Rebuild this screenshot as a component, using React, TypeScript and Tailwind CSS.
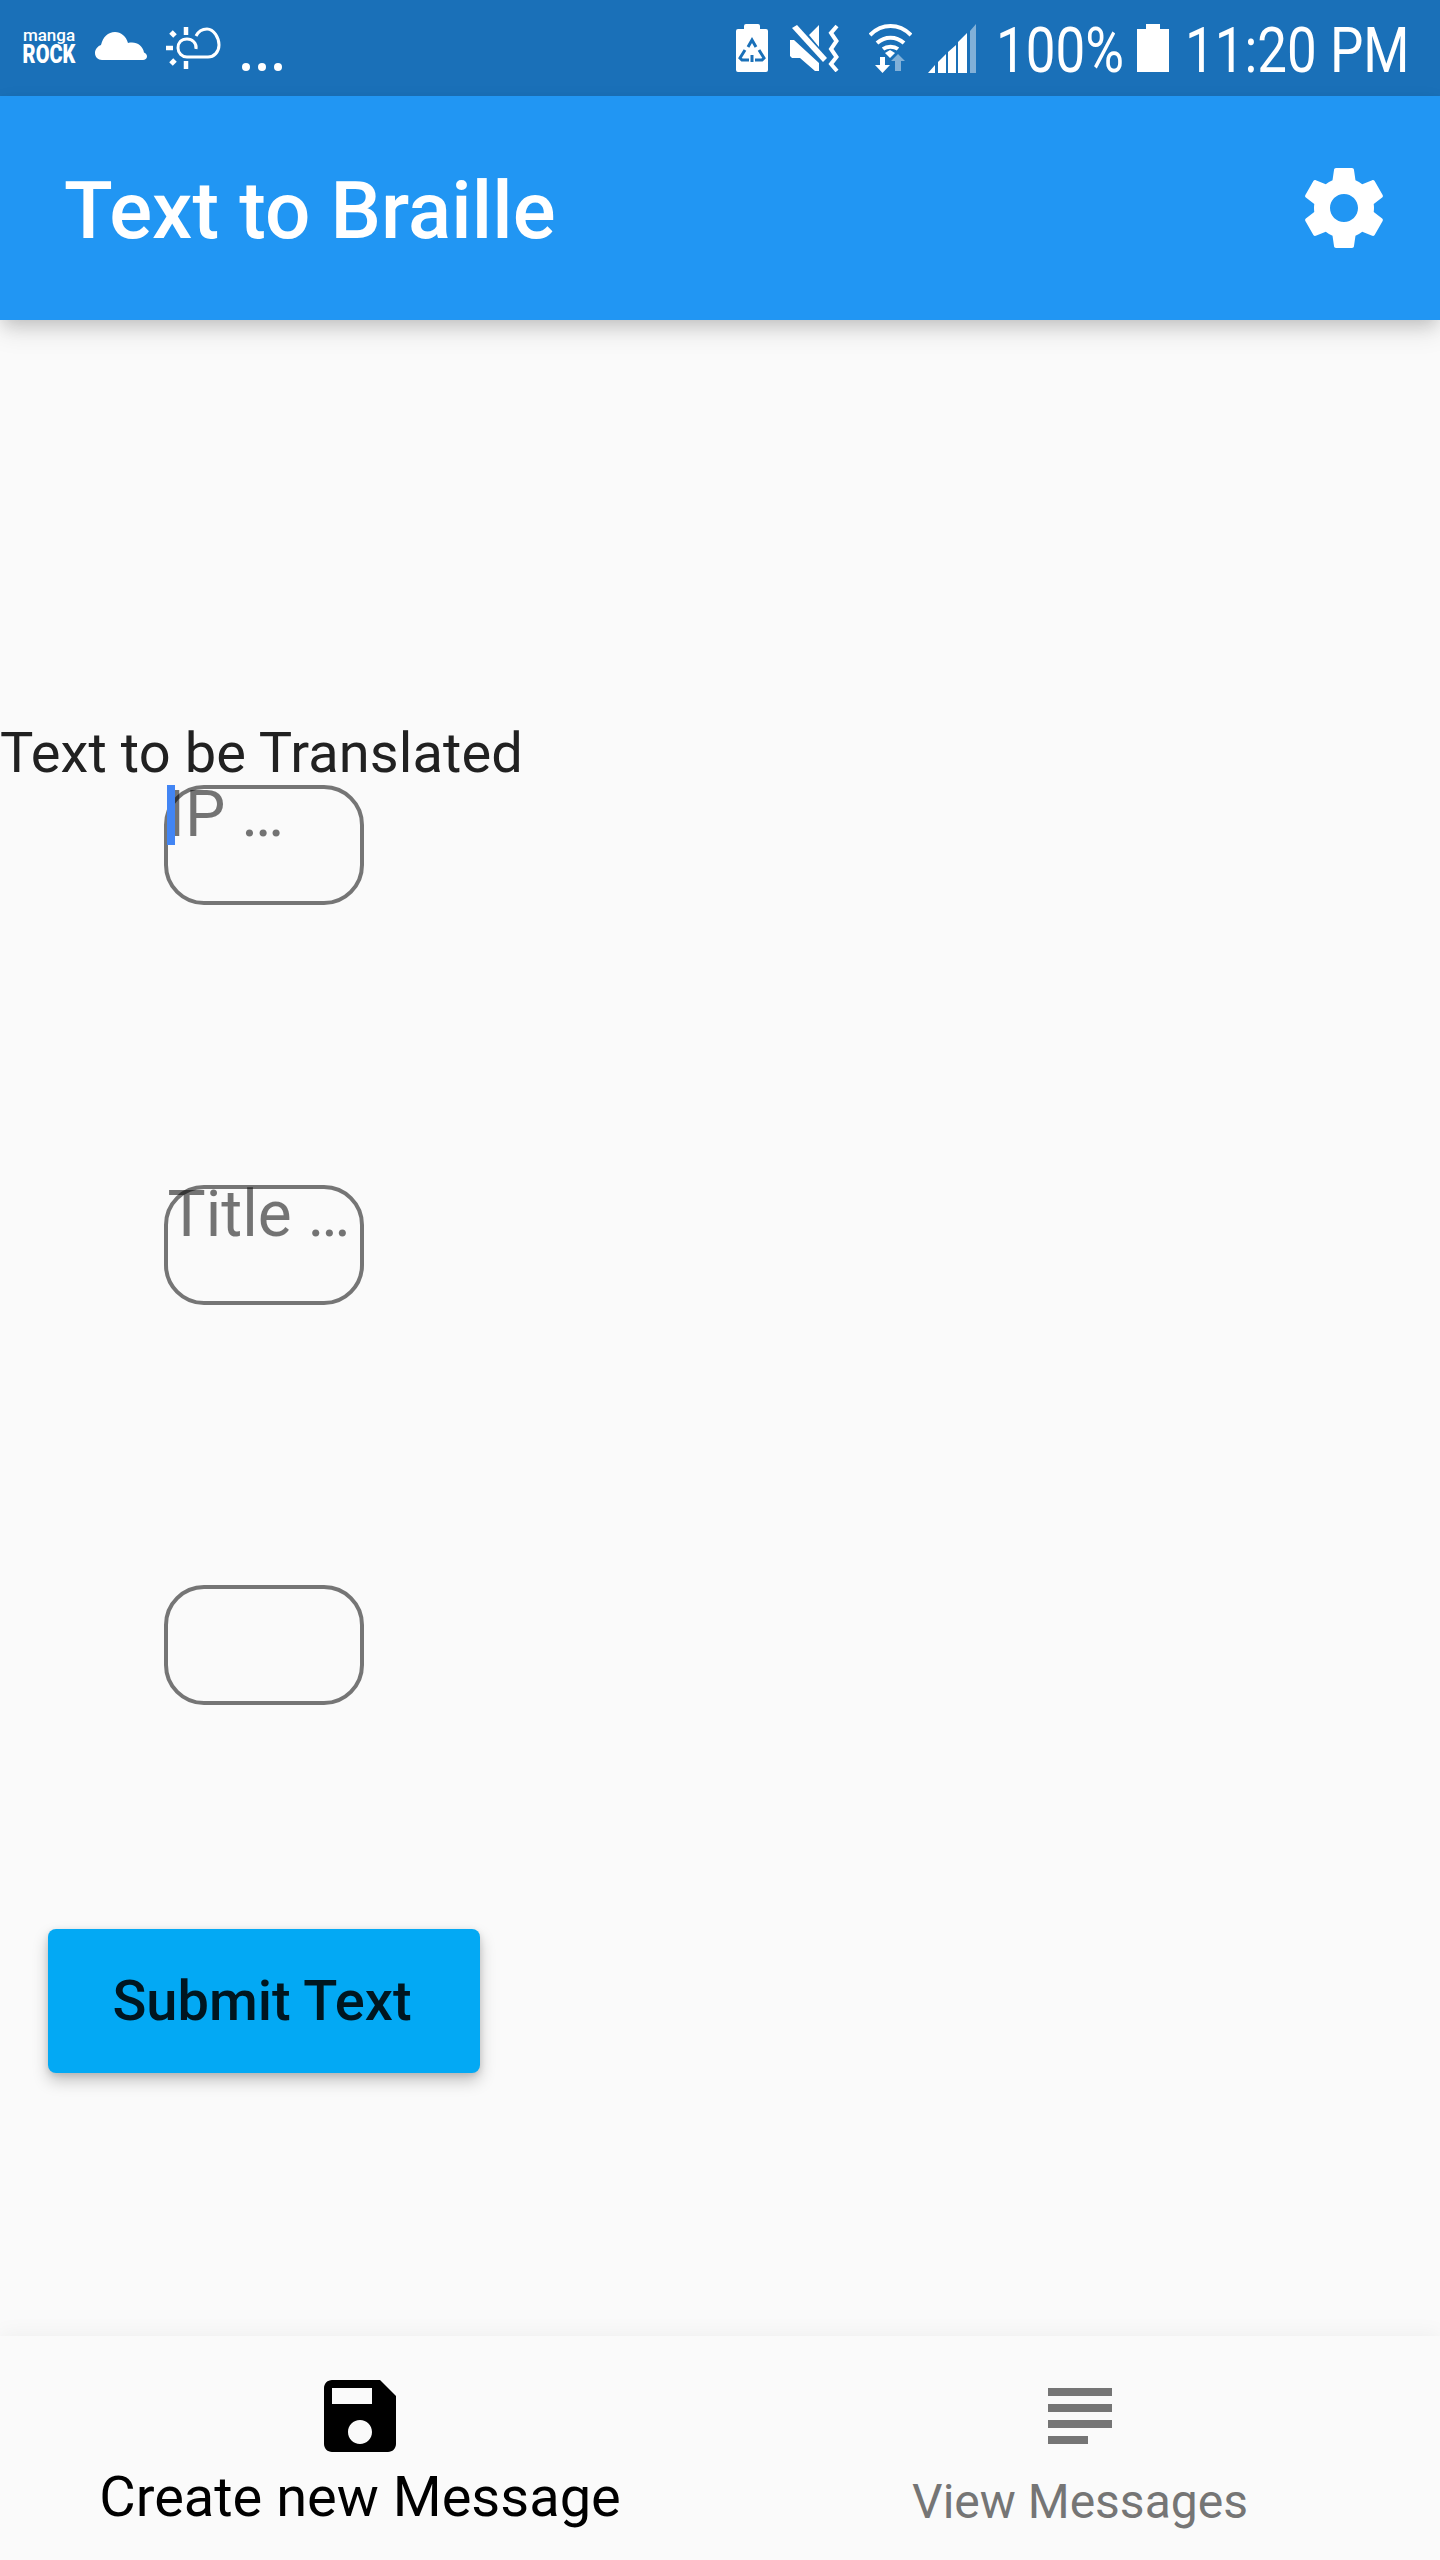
const SAVE_ICON = 'M17 3H5c-1.11 0-2 .9-2 2v14c0 1.1.89 2 2 2h14c1.1 0 2-.9 2-2V7l-4-4zm-5 16c-1.66 0-3-1.34-3-3s1.34-3 3-3 3 1.34 3 3-1.34 3-3 3zm3-10H5V5h10v4z';
const LIST_ICON = 'M14 17H4v2h10v-2zm6-8H4v2h16V9zM4 15h16v-2H4v2zM4 5v2h16V5H4z';
const GEAR_ICON = 'M19.43 12.98c.04-.32.07-.64.07-.98s-.03-.66-.07-.98l2.11-1.65c.19-.15.24-.42.12-.64l-2-3.46c-.12-.22-.39-.3-.61-.22l-2.49 1c-.52-.4-1.08-.73-1.69-.98l-.38-2.65C14.46 2.18 14.25 2 14 2h-4c-.25 0-.46.18-.49.42l-.38 2.65c-.61.25-1.17.59-1.69.98l-2.49-1c-.23-.09-.49 0-.61.22l-2 3.46c-.13.22-.07.49.12.64l2.11 1.65c-.04.32-.07.65-.07.98s.03.66.07.98l-2.11 1.65c-.19.15-.24.42-.12.64l2 3.46c.12.22.39.3.61.22l2.49-1c.52.4 1.08.73 1.69.98l.38 2.65c.03.24.24.42.49.42h4c.25 0 .46-.18.49-.42l.38-2.65c.61-.25 1.17-.59 1.69-.98l2.49 1c.23.09.49 0 .61-.22l2-3.46c.12-.22.07-.49-.12-.64l-2.11-1.65zM12 15.5c-1.93 0-3.5-1.57-3.5-3.5s1.57-3.5 3.5-3.5 3.5 1.57 3.5 3.5-1.57 3.5-3.5 3.5z';

function MaterialIcon({ d, className }: { d: string; className: string }) {
  return (
    <svg viewBox="0 0 24 24" className={className} fill="currentColor">
      <path d={d} />
    </svg>
  );
}

function MangaRock() {
  return (
    <div className="flex h-8 w-[52px] flex-col items-center text-white">
      <span className="-mt-[3px] h-[13px] text-[17px] leading-[12px] font-medium">manga</span>
      <span className="mt-1 h-[18px] origin-center scale-x-[0.8] text-[25px] leading-[18px] font-black whitespace-nowrap">ROCK</span>
    </div>
  );
}

function StatusBar() {
  return (
    <div className="flex h-24 items-center justify-between bg-[#1a70b8] pr-[30px] pl-[23px] text-white">
      <div className="flex items-center">
        <MangaRock />
        <svg viewBox="0 0 52 28" className="mb-1 ml-5 h-7 w-[52px]" fill="currentColor">
          <path d="M7 28C3 28 0 25 0 21c0-4 3-7 6-8C8 5 13 0 20 0c6 0 11 4 13 11 1-.5 3-.5 4-.5 6 0 11 4 12 10 2 1 3 2 3 4 0 2-2 3.500-4 3.500z" />
        </svg>
        <svg viewBox="0 0 55 42" className="ml-[19px] h-[42px] w-[55px]" fill="none" stroke="currentColor" strokeWidth="3">
          <path d="M20 0v8M20 34v8M0 21h7" strokeWidth="4.500" />
          <path d="M5 5l4 4M5 37l4-4" strokeWidth="5" />
          <path d="M30 22c1-6-4-10-9-10-6 0-9 4-9 9s4 9 9 9h21c6 0 11-5 11-12S48 2 41 2c-5 0-9 3-11 7" />
        </svg>
        <span className="mt-[38px] ml-[21px] flex gap-2">
          <i className="size-2 rounded-full bg-white" />
          <i className="size-2 rounded-full bg-white" />
          <i className="size-2 rounded-full bg-white" />
        </span>
      </div>
      <div className="flex items-center">
        <svg viewBox="0 0 32 48" className="h-12 w-8" fill="currentColor">
          <path d="M8 2a2 2 0 0 1 2-2h12a2 2 0 0 1 2 2v3h6a2 2 0 0 1 2 2v39a2 2 0 0 1-2 2H2a2 2 0 0 1-2-2V7a2 2 0 0 1 2-2h6z" />
          <g fill="none" stroke="#1a70b8" strokeWidth="3">
            <path d="M12 23l4-7 4 7" />
            <path d="M9 26l-5 8 2 2h7" />
            <path d="M23 26l5 8-2 2h-7" />
            <path d="M16 31v7" />
          </g>
        </svg>
        <svg viewBox="0 0 50 48" className="ml-[22px] h-12 w-[50px]" fill="currentColor">
          <path d="M7 1l30 33-4 4L2 4z" />
          <path d="M29 1v22L19 11zM0 16h4l25 23v8h-4L10 34H2l-2-2z" />
          <path d="M47 2l-6 7 5.500 8-5.500 8 5.500 8-5.500 7 6 7" fill="none" stroke="currentColor" strokeWidth="4" />
        </svg>
        <svg viewBox="0 0 43 49" className="ml-[29px] h-[49px] w-[43px]" fill="none" stroke="currentColor" strokeWidth="4">
          <path d="M1 11c12-12 29-12 41 0M8 19c8-7 19-7 27 0M14 25c4-3 11-3 15 0" />
          <path d="M16 29l5-3 5 3-5 5z" fill="currentColor" stroke="none" />
          <path d="M11 33h5v8h5l-7.500 8L6 41h5z" fill="currentColor" stroke="none" />
          <path d="M29 30l7 7h-4v10h-6V37h-4z" fill="currentColor" stroke="none" opacity="0.45" />
        </svg>
        <svg viewBox="0 0 48 49" className="ml-4 h-[49px] w-12" fill="currentColor">
          <path d="M0 49l7-8v8zM10 49V38l8-8v19zM20 49V28l8-7v28zM30 49V18l9-9v40z" />
          <path d="M42 49V7l6-7v49z" opacity="0.45" />
        </svg>
        <span className="mt-[6px] ml-5 inline-block w-[130px] origin-left scale-x-[0.84] text-[63px] leading-[48px] whitespace-nowrap">
          100%
        </span>
        <svg viewBox="0 0 32 48" className="ml-[11px] h-12 w-8" fill="currentColor">
          <path d="M9 0h14v5h9v43H0V5h9z" />
        </svg>
        <span className="mt-[6px] ml-4 inline-block w-[225px] origin-left scale-x-[0.84] text-[63px] leading-[48px] whitespace-nowrap">
          11:20 PM
        </span>
      </div>
    </div>
  );
}

function AppBar() {
  return (
    <header className="relative z-10 flex h-56 items-center justify-between bg-[#2196f3] pr-12 pl-16 shadow-[0_8px_16px_-4px_rgba(0,0,0,0.16),0_12px_24px_0_rgba(0,0,0,0.1)]">
      <h1 className="mt-[6px] text-[80px] leading-[94px] font-medium tracking-[0.1px] text-white">Text to Braille</h1>
      <MaterialIcon d={GEAR_ICON} className="size-24 text-white" />
    </header>
  );
}

function Field({ placeholder, focused }: { placeholder?: string; focused?: boolean }) {
  return (
    <div className="relative h-[120px] w-[200px] rounded-[40px] border-4 border-[#757575]">
      {placeholder && (
        <span className="absolute -top-3 left-0 text-[64px] leading-[75px] whitespace-nowrap text-black/54">
          {placeholder}
        </span>
      )}
      {focused && <span className="absolute -top-[4px] -left-px h-[60px] w-2 bg-[#4285f4]" />}
    </div>
  );
}

function NavItem({ d, label, active }: { d: string; label: string; active?: boolean }) {
  return (
    <div className={`flex flex-1 flex-col items-center pt-8 ${active ? 'text-black' : 'text-[#757575]'}`}>
      <MaterialIcon d={d} className="size-24" />
      {active ? (
        <span className="text-[56px] leading-[66px]">{label}</span>
      ) : (
        <span className="mt-[10px] text-[48px] leading-[56px]">{label}</span>
      )}
    </div>
  );
}

export default function App() {
  return (
    <div className="flex h-[2560px] w-[1440px] flex-col overflow-hidden bg-[#fafafa] [font-family:Roboto,sans-serif]">
      <StatusBar />
      <AppBar />
      <main className="flex w-[527px] flex-1 flex-col items-center pt-[400px]">
        <label className="self-start text-[56px] leading-[66px] tracking-[0.08px] text-[#212121]">Text to be Translated</label>
        <div className="-mt-px">
          <Field placeholder="IP …" focused />
        </div>
        <div className="mt-[280px]">
          <Field placeholder="Title …" />
        </div>
        <div className="mt-[280px]">
          <Field />
        </div>
        <button className="mt-[224px] h-36 w-[432px] shrink-0 rounded-lg bg-[#03a9f4] pr-[3px] text-[56px] font-medium text-black/87 shadow-[0_8px_16px_rgba(0,0,0,0.22),0_2px_6px_rgba(0,0,0,0.12)]">
          Submit Text
        </button>
      </main>
      <nav className="flex h-56 bg-[#fafafa] shadow-[0_-2px_20px_rgba(0,0,0,0.05)]">
        <NavItem d={SAVE_ICON} label="Create new Message" active />
        <NavItem d={LIST_ICON} label="View Messages" />
      </nav>
    </div>
  );
}
